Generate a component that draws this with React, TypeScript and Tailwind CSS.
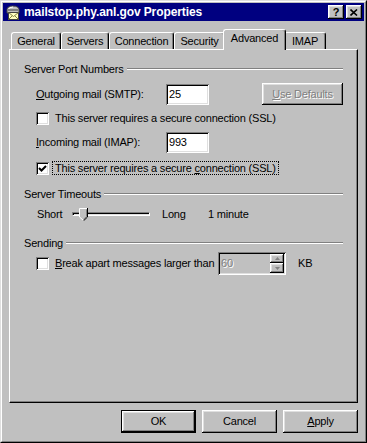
const raised =
  "shadow-[inset_-1px_-1px_#000,inset_1px_1px_#fff,inset_-2px_-2px_#808080,inset_2px_2px_#dfdfdf]";
const sunken =
  "shadow-[inset_1px_1px_#808080,inset_-1px_-1px_#fff,inset_2px_2px_#000,inset_-2px_-2px_#dfdfdf]";
const dim = "text-[#808080] [text-shadow:1px_1px_0_#fff]";

function TitleIcon() {
  return (
    <svg width="16" height="16" viewBox="0 0 16 16" className="shrink-0">
      <path d="M2 6 Q2 2 8 2 Q14 2 14 6 L14 9 L2 9 Z" fill="#c0c0c0" stroke="#404040" strokeWidth="1" />
      <path d="M3 6 Q4 3 8 3" stroke="#fff" fill="none" strokeWidth="1" />
      <rect x="2" y="5" width="12" height="2" fill="#808080" />
      <rect x="3.5" y="8.5" width="10" height="7" fill="#ffffc0" stroke="#404040" />
      <path d="M3.5 8.5 L8.5 12.5 L13.5 8.5 M3.5 15.5 L7 12 M13.5 15.5 L10 12" stroke="#808040" fill="none" strokeWidth="1" />
    </svg>
  );
}

function CaptionBtn({ children }: { children: React.ReactNode }) {
  return (
    <div className={`w-[16px] h-[14px] bg-[#c0c0c0] flex items-center justify-center ${raised}`}>
      {children}
    </div>
  );
}

function Tab({ label, w, active }: { label: string; w: string; active?: boolean }) {
  if (active) {
    return (
      <div
        className={`relative z-10 ${w} -mx-[2px] h-[21px] -mb-[1px] bg-[#c0c0c0] border-t border-l border-white border-r border-r-black rounded-tl-[3px] rounded-tr-[3px] shadow-[inset_-1px_0_#808080] flex items-center justify-center pb-[3px]`}
      >
        {label}
      </div>
    );
  }
  return (
    <div
      className={`${w} h-[17px] border-t border-l border-white border-r border-r-black rounded-tl-[3px] rounded-tr-[3px] shadow-[inset_-1px_0_#808080] flex items-center justify-center pt-[1px]`}
    >
      {label}
    </div>
  );
}

function Header({ title, mt }: { title: string; mt: string }) {
  return (
    <div className={`flex items-center h-[14px] ${mt}`}>
      <span>{title}</span>
      <div className="flex-1 ml-[3px] h-[2px] border-t border-[#808080] border-b border-b-white" />
    </div>
  );
}

function Check({ checked }: { checked?: boolean }) {
  return (
    <div className={`w-[13px] h-[13px] bg-white shrink-0 flex items-center justify-center ${sunken}`}>
      {checked && (
        <svg width="9" height="9" viewBox="0 0 9 9">
          <path d="M1 4 L3.5 6.5 L8 2" stroke="#000" strokeWidth="2" fill="none" />
        </svg>
      )}
    </div>
  );
}

function PushBtn({
  children,
  w,
  def,
  disabled,
}: {
  children: React.ReactNode;
  w: string;
  def?: boolean;
  disabled?: boolean;
}) {
  return (
    <div
      className={`${w} bg-[#c0c0c0] flex items-center justify-center ${def ? "border border-black" : ""} ${disabled ? dim : ""}`}
    >
      <div className={`w-full h-full flex items-center justify-center ${raised}`}>{children}</div>
    </div>
  );
}

function Arrow({ up }: { up?: boolean }) {
  return (
    <svg width="5" height="3" viewBox="0 0 5 3">
      <path d={up ? "M2.5 0 L5 3 L0 3 Z" : "M0 0 L5 0 L2.5 3 Z"} fill="#808080" />
    </svg>
  );
}

export default function App() {
  return (
    <div className="w-[367px] h-[443px] bg-[#c0c0c0] border-t border-l border-[#dfdfdf] border-r border-b border-r-black border-b-black font-['Liberation_Sans',Arial,sans-serif] text-[11px] tracking-[-0.2px] text-black leading-none whitespace-nowrap select-none">
      <div className="h-full border-t border-l border-white border-r border-b border-r-[#808080] border-b-[#808080] p-[1px] flex flex-col">
        {/* title bar */}
        <div className="h-[18px] bg-[#000080] flex items-center pl-[2px] pr-[2px] shrink-0">
          <TitleIcon />
          <span className="ml-[3px] text-white font-bold text-[12px] tracking-[-0.1px]">
            mailstop.phy.anl.gov Properties
          </span>
          <div className="ml-auto flex gap-[2px]">
            <CaptionBtn>
              <span className="font-bold text-[11px] leading-none">?</span>
            </CaptionBtn>
            <CaptionBtn>
              <svg width="8" height="7" viewBox="0 0 8 7">
                <path d="M0.5 0.5 L7 6.5 M7 0.5 L0.5 6.5" stroke="#000" strokeWidth="1.6" />
              </svg>
            </CaptionBtn>
          </div>
        </div>

        <div className="flex-1 flex flex-col px-[6px]">
          {/* tabs */}
          <div className="mt-[8px] h-[20px] flex items-end pl-[2px]">
            <Tab label="General" w="w-[50px]" />
            <Tab label="Servers" w="w-[48px]" />
            <Tab label="Connection" w="w-[65px]" />
            <Tab label="Security" w="w-[51px]" />
            <Tab label="Advanced" w="w-[63px]" active />
            <Tab label="IMAP" w="w-[42px]" />
          </div>

          {/* panel */}
          <div className="relative h-[354px] border-t border-l border-white border-r border-b border-r-black border-b-black shadow-[inset_-1px_-1px_#808080] pl-[14px] pr-[14px] pt-[12px] flex flex-col">
            <Header title="Server Port Numbers" mt="mt-0" />

            <div className="mt-[6px] h-[24px] flex items-center pl-[12px]">
              <span className="w-[130px]">
                <u>O</u>utgoing mail (SMTP):
              </span>
              <div className={`w-[43px] h-[21px] bg-white flex items-center pl-[3px] ${sunken}`}>25</div>
              <div className="ml-auto h-[22px] flex">
                <PushBtn w="w-[81px]" disabled>
                  <span>
                    <u>U</u>se Defaults
                  </span>
                </PushBtn>
              </div>
            </div>

            <div className="mt-[6px] h-[13px] flex items-center pl-[12px]">
              <Check />
              <span className="ml-[6px]">This server requires a secure connection (SSL)</span>
            </div>

            <div className="mt-[7px] h-[20px] flex items-center pl-[12px]">
              <span className="w-[130px]">
                <u>I</u>ncoming mail (IMAP):
              </span>
              <div className={`w-[43px] h-[21px] bg-white flex items-center pl-[3px] ${sunken}`}>993</div>
            </div>

            <div className="mt-[9px] h-[14px] flex items-center pl-[12px]">
              <Check checked />
              <div className="ml-[3px] h-[14px] px-[2px] flex items-center border border-dotted border-black">
                <span>
                  This server requires a secure <u>c</u>onnection (SSL)
                </span>
              </div>
            </div>

            <Header title="Server Timeouts" mt="mt-[12px]" />

            <div className="mt-[5px] h-[16px] flex items-center pl-[13px]">
              <span className="w-[35px]">Short</span>
              <div className="relative w-[78px] h-[4px] border-t border-l border-[#808080] border-r border-b border-r-white border-b-white shadow-[inset_1px_1px_#000,inset_-1px_-1px_#dfdfdf]">
                <svg
                  width="9"
                  height="13"
                  viewBox="0 0 9 13"
                  className="absolute left-[6px] -top-[5px]"
                >
                  <path d="M0 0 H9 V9 L4.5 13 L0 9 Z" fill="#c0c0c0" />
                  <path d="M0.5 9 V0.5 H8" stroke="#fff" fill="none" />
                  <path d="M0.5 9 L4.5 12.5" stroke="#fff" fill="none" />
                  <path d="M8.5 0 V9 L4.5 12.8" stroke="#000" fill="none" />
                  <path d="M7.5 1.5 V8.6 L4.5 11.3" stroke="#808080" fill="none" />
                </svg>
              </div>
              <span className="ml-[12px] w-[46px]">Long</span>
              <span>1 minute</span>
            </div>

            <Header title="Sending" mt="mt-[14px]" />

            <div className="mt-[2px] h-[23px] flex items-center pl-[12px]">
              <Check />
              <span className="ml-[6px] w-[163px]">
                <u>B</u>reak apart messages larger than
              </span>
              <div className={`w-[68px] h-[23px] bg-[#c0c0c0] flex items-center pl-[3px] pr-[2px] ${sunken}`}>
                <span className={dim}>60</span>
                <div className="ml-auto w-[14px] h-[19px] flex flex-col">
                  <div className={`h-[9px] flex items-center justify-center ${raised}`}>
                    <Arrow up />
                  </div>
                  <div className={`h-[10px] flex items-center justify-center ${raised}`}>
                    <Arrow />
                  </div>
                </div>
              </div>
              <span className="ml-[12px]">KB</span>
            </div>
          </div>

          {/* dialog buttons */}
          <div className="mt-[7px] h-[23px] flex justify-end gap-[6px]">
            <PushBtn w="w-[75px]" def>
              OK
            </PushBtn>
            <PushBtn w="w-[75px]">Cancel</PushBtn>
            <PushBtn w="w-[75px]">
              <span>
                <u>A</u>pply
              </span>
            </PushBtn>
          </div>
        </div>
      </div>
    </div>
  );
}
